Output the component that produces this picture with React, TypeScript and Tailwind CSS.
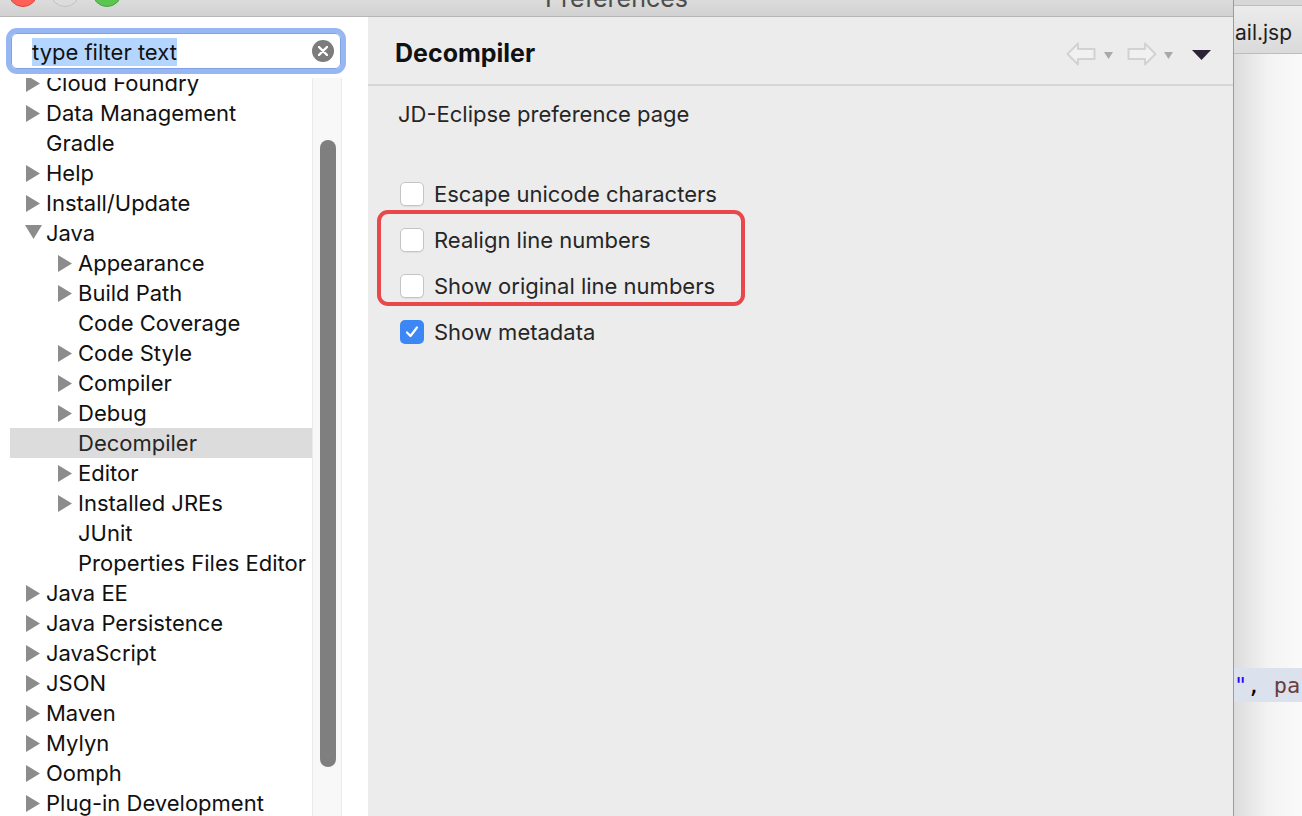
import React from 'react'

type Item = {
  label: string
  level: 0 | 1
  arrow?: 'right' | 'down'
  selected?: boolean
}

const items: Item[] = [
  { label: 'Cloud Foundry', level: 0, arrow: 'right' },
  { label: 'Data Management', level: 0, arrow: 'right' },
  { label: 'Gradle', level: 0 },
  { label: 'Help', level: 0, arrow: 'right' },
  { label: 'Install/Update', level: 0, arrow: 'right' },
  { label: 'Java', level: 0, arrow: 'down' },
  { label: 'Appearance', level: 1, arrow: 'right' },
  { label: 'Build Path', level: 1, arrow: 'right' },
  { label: 'Code Coverage', level: 1 },
  { label: 'Code Style', level: 1, arrow: 'right' },
  { label: 'Compiler', level: 1, arrow: 'right' },
  { label: 'Debug', level: 1, arrow: 'right' },
  { label: 'Decompiler', level: 1, selected: true },
  { label: 'Editor', level: 1, arrow: 'right' },
  { label: 'Installed JREs', level: 1, arrow: 'right' },
  { label: 'JUnit', level: 1 },
  { label: 'Properties Files Editor', level: 1 },
  { label: 'Java EE', level: 0, arrow: 'right' },
  { label: 'Java Persistence', level: 0, arrow: 'right' },
  { label: 'JavaScript', level: 0, arrow: 'right' },
  { label: 'JSON', level: 0, arrow: 'right' },
  { label: 'Maven', level: 0, arrow: 'right' },
  { label: 'Mylyn', level: 0, arrow: 'right' },
  { label: 'Oomph', level: 0, arrow: 'right' },
  { label: 'Plug-in Development', level: 0, arrow: 'right' },
]

const options = [
  { label: 'Escape unicode characters', checked: false },
  { label: 'Realign line numbers', checked: false },
  { label: 'Show original line numbers', checked: false },
  { label: 'Show metadata', checked: true },
]

function Arrow({ dir }: { dir?: 'right' | 'down' }) {
  if (dir === 'right') {
    return (
      <svg width="16" height="17" viewBox="0 0 16 17">
        <polygon points="1,0 15,8.5 1,17" fill="#8c8c8c" />
      </svg>
    )
  }
  if (dir === 'down') {
    return (
      <svg width="17" height="15" viewBox="0 0 17 15" className="mt-[-4px]">
        <polygon points="0,1 17,1 8.5,15" fill="#8c8c8c" />
      </svg>
    )
  }
  return null
}

function TreeRow({ item }: { item: Item }) {
  return (
    <div
      className={
        'flex h-[30px] items-center ' +
        (item.level === 0 ? 'pl-[15px] ' : 'pl-[47px] ') +
        (item.selected ? 'bg-[#dcdcdc] text-[#262626]' : 'text-[#111111]')
      }
    >
      <div className="flex w-[21px] items-center">
        <Arrow dir={item.arrow} />
      </div>
      <span className="whitespace-nowrap text-[22px] leading-[30px]">{item.label}</span>
    </div>
  )
}

function Checkbox({ checked }: { checked: boolean }) {
  if (checked) {
    return (
      <div className="flex h-[24px] w-[24px] items-center justify-center rounded-[5px] bg-[#3d87f5]">
        <svg width="16" height="16" viewBox="0 0 16 16">
          <path d="M3 8.5 L6.5 12 L13 3.5" fill="none" stroke="#ffffff" strokeWidth="2.2" strokeLinecap="round" strokeLinejoin="round" />
        </svg>
      </div>
    )
  }
  return <div className="h-[24px] w-[24px] rounded-[5px] border border-[#c4c4c4] bg-white shadow-[0_1px_1px_rgba(0,0,0,0.06)]" />
}

function NavArrow({ flip }: { flip?: boolean }) {
  return (
    <svg width="30" height="24" viewBox="0 0 30 24" className={flip ? 'scale-x-[-1]' : ''}>
      <path d="M1.5 12 L12 1.5 L12 7 L28.5 7 L28.5 17 L12 17 L12 22.5 Z" fill="#f1f1f1" stroke="#d2d2d2" strokeWidth="2" strokeLinejoin="round" />
    </svg>
  )
}

function SmallDrop() {
  return (
    <svg width="9" height="7" viewBox="0 0 9 7">
      <polygon points="0,0 9,0 4.5,7" fill="#a9a9a9" />
    </svg>
  )
}

export default function App() {
  return (
    <div className="relative flex h-[816px] w-[1302px] overflow-hidden bg-white font-['Inter',sans-serif]">
      {/* preferences dialog */}
      <div className="flex h-full w-[1234px] flex-col border-r border-[#9c9c9c]">
        {/* title bar */}
        <div className="relative flex h-[17px] shrink-0 justify-center overflow-hidden border-b border-[#b6b6b6] bg-gradient-to-b from-[#dcdcdc] to-[#d1d1d1]">
          <div className="absolute left-[8px] top-[-23px] flex gap-[12px]">
            <div className="h-[30px] w-[30px] rounded-full border border-[#e0443e] bg-[#fe5f57]" />
            <div className="h-[30px] w-[30px] rounded-full border border-[#c2c2c2] bg-[#dcdcdc]" />
            <div className="h-[30px] w-[30px] rounded-full border border-[#3faa35] bg-[#5cc551]" />
          </div>
          <span className="mt-[-14px] text-[25px] leading-[25px] text-[#4c4c4c]">Preferences</span>
        </div>

        <div className="flex min-h-0 flex-1">
          {/* left side */}
          <div className="flex w-[368px] shrink-0 flex-col bg-white">
            <div className="pl-[6px] pt-[11px]">
              <div className="h-[46px] w-[340px] rounded-[11px] border-[5px] border-[#97b7f3]">
                <div className="flex h-full items-center rounded-[6px] border border-[#7fa1e6] bg-white pl-[20px]">
                  <span className="mt-[2px] bg-[#b4d6fe] text-[22px] leading-[28px] text-[#111111]">type filter text</span>
                  <div className="ml-auto mr-[6px] flex h-[22px] w-[22px] items-center justify-center rounded-full bg-[#7c7c7c]">
                    <svg width="10" height="10" viewBox="0 0 10 10">
                      <path d="M1 1 L9 9 M9 1 L1 9" stroke="#ffffff" strokeWidth="2.4" strokeLinecap="round" />
                    </svg>
                  </div>
                </div>
              </div>
            </div>

            <div className="mt-[4px] flex min-h-0 flex-1">
              <div className="ml-[10px] w-[302px] overflow-hidden">
                <div className="mt-[-10px]">
                  {items.map((it) => (
                    <TreeRow key={it.label} item={it} />
                  ))}
                </div>
              </div>
              {/* scrollbar */}
              <div className="w-[30px] border-x border-[#ebebeb] bg-[#f8f8f8] pl-[7px]">
                <div className="mt-[62px] h-[627px] w-[16px] rounded-full bg-[#7f7f7f]" />
              </div>
            </div>
          </div>

          {/* right side */}
          <div className="flex flex-1 flex-col bg-[#ececec]">
            <div className="flex h-[69px] shrink-0 items-center border-b-2 border-[#d6d6d6] pl-[27px] pr-[22px] pt-[6px]">
              <span className="text-[25px] font-bold text-[#111111]">Decompiler</span>
              <div className="ml-auto flex items-center">
                <NavArrow />
                <div className="ml-[8px] mt-[3px]">
                  <SmallDrop />
                </div>
                <div className="ml-[14px]">
                  <NavArrow flip />
                </div>
                <div className="ml-[7px] mt-[3px]">
                  <SmallDrop />
                </div>
                <div className="ml-[19px] mt-[2px]">
                  <svg width="19" height="10" viewBox="0 0 19 10">
                    <polygon points="0,0 19,0 9.5,10" fill="#2c2336" />
                  </svg>
                </div>
              </div>
            </div>

            <div className="pl-[30px] pt-[14px] text-[22px] leading-[28px] text-[#262626]">JD-Eclipse preference page</div>

            <div className="mt-[43px] flex flex-col pl-[32px]">
              {options.map((o) => (
                <div key={o.label} className="flex h-[46px] items-center gap-[10px]">
                  <Checkbox checked={o.checked} />
                  <span className="text-[22px] text-[#262626]">{o.label}</span>
                </div>
              ))}
            </div>
          </div>
        </div>
      </div>

      {/* editor behind */}
      <div className="flex flex-1 flex-col">
        <div className="h-[6px] shrink-0 border-b border-[#bcbcbc] bg-[#d7d7d7]" />
        <div className="flex h-[48px] shrink-0 items-center border-b border-[#b5bed0] bg-gradient-to-b from-[#ececec] to-[#dadada] pl-[1px] pt-[6px]">
          <span className="whitespace-nowrap text-[21px] text-[#1e1e1e]">ail.jsp</span>
        </div>
        <div className="flex-1 bg-gradient-to-r from-[#dcdcdc] via-[#f3f3f3] to-[#fafafa]">
          <div className="mt-[614px] flex h-[34px] items-center whitespace-pre bg-[#dbe2ed] font-['DejaVu_Sans_Mono',monospace] text-[22px]">
            <span className="whitespace-pre text-[#2a00ff]">"</span>
            <span className="whitespace-pre text-[#000000]">, </span>
            <span className="whitespace-pre text-[#6a3e3e]">pa</span>
          </div>
        </div>
      </div>

      {/* red annotation box */}
      <div className="absolute left-[377px] top-[210px] h-[96px] w-[368px] rounded-[11px] border-[4px] border-[#e8474b]" />
    </div>
  )
}
